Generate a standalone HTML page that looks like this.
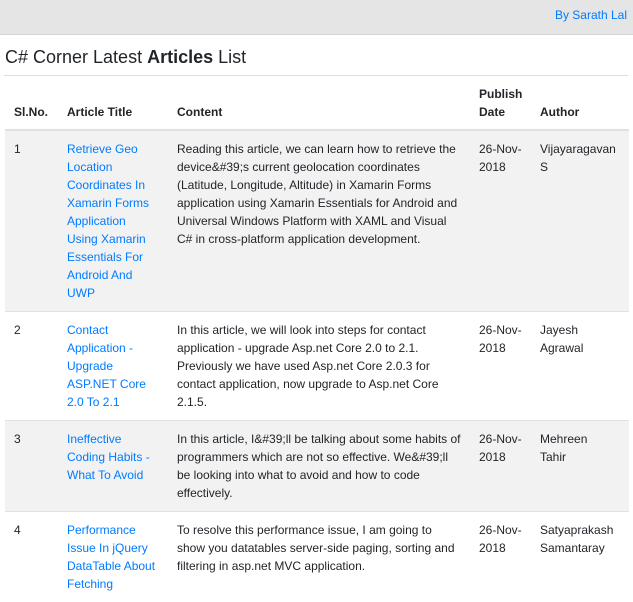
<!DOCTYPE html>
<html><head><style>
body{margin:0;font-family:"Liberation Sans",Arial,sans-serif;color:#212529;background:#fff;width:633px;height:593px;overflow:hidden}
.top{height:34px;background:#e5e5e5;border-bottom:1px solid #d6d6d6;position:relative}
.top a{position:absolute;right:6px;top:8px;font-size:12px;color:#007bff;text-decoration:none}
h2{font-size:18px;font-weight:normal;margin:0;position:absolute;left:5px;top:47px}
hr{position:absolute;left:4px;width:624px;top:75px;margin:0;border:0;border-top:1px solid #ddd}
table{position:absolute;left:5px;top:76px;width:624px;border-collapse:collapse;font-size:12px;line-height:18px;table-layout:fixed}
td,th{padding:9px 0 9px 9px;vertical-align:top;text-align:left;border-top:1px solid #dee2e6}
th{vertical-align:bottom;border-top:0;border-bottom:2px solid #dee2e6;padding-top:9px;padding-bottom:8px}
tr.s td{background:#f2f2f2}
a{color:#007bff;text-decoration:none}
</style></head><body>
<div class="top"><a>By Sarath Lal</a></div>
<h2>C# Corner Latest <b>Articles</b> List</h2>
<hr>
<table>
<colgroup><col style="width:53px"><col style="width:110px"><col style="width:302px"><col style="width:61px"><col style="width:98px"></colgroup>
<tr><th>Sl.No.</th><th>Article Title</th><th>Content</th><th>Publish<br>Date</th><th>Author</th></tr>
<tr class="s"><td>1</td><td><a>Retrieve Geo<br>Location<br>Coordinates In<br>Xamarin Forms<br>Application<br>Using Xamarin<br>Essentials For<br>Android And<br>UWP</a></td><td>Reading this article, we can learn how to retrieve the<br>device&amp;#39;s current geolocation coordinates<br>(Latitude, Longitude, Altitude) in Xamarin Forms<br>application using Xamarin Essentials for Android and<br>Universal Windows Platform with XAML and Visual<br>C# in cross-platform application development.</td><td>26-Nov-<br>2018</td><td>Vijayaragavan<br>S</td></tr>
<tr><td>2</td><td><a>Contact<br>Application -<br>Upgrade<br>ASP.NET Core<br>2.0 To 2.1</a></td><td>In this article, we will look into steps for contact<br>application - upgrade Asp.net Core 2.0 to 2.1.<br>Previously we have used Asp.net Core 2.0.3 for<br>contact application, now upgrade to Asp.net Core<br>2.1.5.</td><td>26-Nov-<br>2018</td><td>Jayesh<br>Agrawal</td></tr>
<tr class="s"><td>3</td><td><a>Ineffective<br>Coding Habits -<br>What To Avoid</a></td><td>In this article, I&amp;#39;ll be talking about some habits of<br>programmers which are not so effective. We&amp;#39;ll<br>be looking into what to avoid and how to code<br>effectively.</td><td>26-Nov-<br>2018</td><td>Mehreen<br>Tahir</td></tr>
<tr><td>4</td><td><a>Performance<br>Issue In jQuery<br>DataTable About<br>Fetching</a></td><td>To resolve this performance issue, I am going to<br>show you datatables server-side paging, sorting and<br>filtering in asp.net MVC application.</td><td>26-Nov-<br>2018</td><td>Satyaprakash<br>Samantaray</td></tr>
</table>
</body></html>
